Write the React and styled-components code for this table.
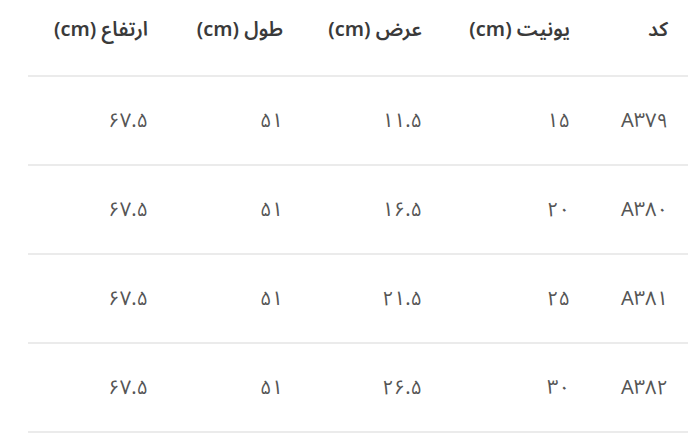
import styled, { createGlobalStyle } from 'styled-components';

const GlobalStyle = createGlobalStyle`
  body {
    margin: 0;
    background: #fff;
    font-family: "Noto Sans Arabic", "DejaVu Sans", sans-serif;
  }
`;

const rows = [
  { code: 'A۳۷۹', unit: '۱۵', width: '۱۱.۵', length: '۵۱', height: '۶۷.۵' },
  { code: 'A۳۸۰', unit: '۲۰', width: '۱۶.۵', length: '۵۱', height: '۶۷.۵' },
  { code: 'A۳۸۱', unit: '۲۵', width: '۲۱.۵', length: '۵۱', height: '۶۷.۵' },
  { code: 'A۳۸۲', unit: '۳۰', width: '۲۶.۵', length: '۵۱', height: '۶۷.۵' },
];

const columns = [
  { key: 'code', label: 'کد', width: 98 },
  { key: 'unit', label: 'یونیت (cm)', width: 148 },
  { key: 'width', label: 'عرض (cm)', width: 139 },
  { key: 'length', label: 'طول (cm)', width: 135 },
  { key: 'height', label: 'ارتفاع (cm)', width: 140 },
];

export default function App() {
  return (
    <>
      <GlobalStyle />
      <Wrapper>
        <Table dir="rtl">
          <colgroup>
            {columns.map((c) => (
              <Col key={c.key} $w={c.width} />
            ))}
          </colgroup>
          <thead>
            <tr>
              {columns.map((c) => (
                <HeadCell key={c.key}>{c.label}</HeadCell>
              ))}
            </tr>
          </thead>
          <tbody>
            {rows.map((r) => (
              <tr key={r.code}>
                {columns.map((c) => (
                  <Cell key={c.key}>{r[c.key]}</Cell>
                ))}
              </tr>
            ))}
          </tbody>
        </Table>
      </Wrapper>
    </>
  );
}

const Wrapper = styled.div`
  padding: 0 12px 0 28px;
`;

const Table = styled.table`
  width: 100%;
  border-collapse: collapse;
  table-layout: fixed;
`;

const Col = styled.col`
  width: ${(p) => p.$w}px;
`;

const HeadCell = styled.th`
  text-align: right;
  padding: 14px 20px 0 0;
  height: 61px;
  vertical-align: top;
  font-size: 20px;
  line-height: 32px;
  font-weight: 600;
  color: #3a3a3a;
  border-bottom: 2px solid #ebebeb;
  white-space: nowrap;
`;

const Cell = styled.td`
  text-align: right;
  padding: 0 20px 0 0;
  height: 87px;
  font-size: 20px;
  color: #555;
  border-bottom: 2px solid #ebebeb;
`;
